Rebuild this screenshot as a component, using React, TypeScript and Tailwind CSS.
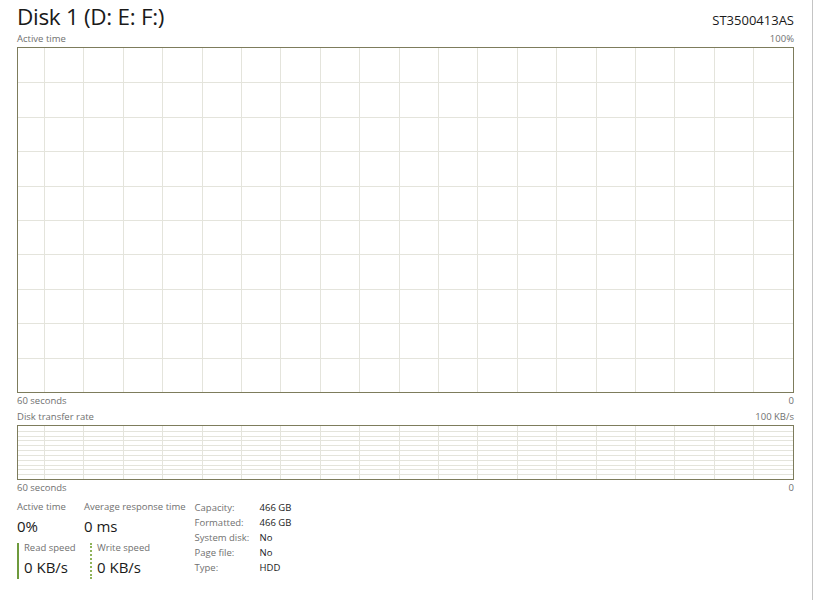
import React from "react";

// ---------------------------------------------------------------------------
// Grid drawn behind an empty performance graph
// ---------------------------------------------------------------------------
function GraphGrid({
  width,
  height,
  rows,
  colOffset,
  colStep,
}: {
  width: number;
  height: number;
  rows: number;
  colOffset: number;
  colStep: number;
}) {
  const cols: number[] = [];
  for (let x = colOffset; x < width; x += colStep) cols.push(Math.round(x) + 0.5);
  const lines: number[] = [];
  for (let i = 1; i < rows; i++) lines.push(Math.round((height * i) / rows) + 0.5);

  return (
    <svg width={width} height={height} className="block">
      {lines.map((y) => (
        <line key={"h" + y} x1={0} x2={width} y1={y} y2={y} stroke="#e4e4dc" strokeWidth={1} />
      ))}
      {cols.map((x) => (
        <line key={"v" + x} x1={x} x2={x} y1={0} y2={height} stroke="#e4e4dc" strokeWidth={1} />
      ))}
    </svg>
  );
}

function AxisRow({ left, right }: { left: string; right: string }) {
  return (
    <div className="flex justify-between items-center h-[14px] text-[9.5px] leading-none text-[#707070]">
      <span>{left}</span>
      <span>{right}</span>
    </div>
  );
}

function Stat({ label, value }: { label: string; value: string }) {
  return (
    <div className="flex flex-col whitespace-nowrap">
      <span className="text-[9.5px] leading-[14px] text-[#707070]">{label}</span>
      <span className="text-[15px] leading-[20px] text-[#1a1a1a] mt-[2px]">{value}</span>
    </div>
  );
}

const details: [string, string][] = [
  ["Capacity:", "466 GB"],
  ["Formatted:", "466 GB"],
  ["System disk:", "No"],
  ["Page file:", "No"],
  ["Type:", "HDD"],
];

export default function App() {
  return (
    <div
      className="w-[815px] h-[600px] bg-white flex overflow-hidden"
      style={{ fontFamily: '"Open Sans", "Noto Sans", sans-serif' }}>
      <div className="w-[812px] pl-[17px] pr-[18px] flex flex-col">
        {/* Header */}
        <div className="flex justify-between items-end h-[30px] text-[#1a1a1a]">
          <span className="text-[22.5px] leading-none tracking-[-0.3px] mb-[2px]">Disk 1 (D: E: F:)</span>
          <span className="text-[13px] leading-none mb-[3px]">ST3500413AS</span>
        </div>

        <div className="mt-[2px]">
          <AxisRow left="Active time" right="100%" />
        </div>

        {/* Active time graph */}
        <div className="mt-[1px] border border-[#7d7c5c] h-[346px]">
          <GraphGrid width={775} height={344} rows={10} colOffset={26} colStep={39.4} />
        </div>
        <div className="mt-[1px]">
          <AxisRow left="60 seconds" right="0" />
        </div>
        <div className="mt-[2px]">
          <AxisRow left="Disk transfer rate" right="100 KB/s" />
        </div>

        {/* Transfer rate graph */}
        <div className="mt-[1px] border border-[#7d7c5c] h-[55px]">
          <GraphGrid width={775} height={53} rows={11} colOffset={26} colStep={39.4} />
        </div>
        <div className="mt-[1px]">
          <AxisRow left="60 seconds" right="0" />
        </div>

        {/* Stats */}
        <div className="flex items-start mt-[5px]">
          <div className="flex flex-col">
            <div className="flex">
              <div className="w-[67px]">
                <Stat label="Active time" value="0%" />
              </div>
              <Stat label="Average response time" value="0 ms" />
            </div>
            <div className="flex mt-[5px]">
              <div className="w-[73px] flex">
                <div className="w-[2px] bg-[#6e9a3c] mt-[2px] h-[36px]" />
                <div className="ml-[5px]">
                  <Stat label="Read speed" value="0 KB/s" />
                </div>
              </div>
              <div className="flex">
                <div className="w-[2px] mt-[2px] h-[36px] border-l-2 border-dotted border-[#8fb35a]" />
                <div className="ml-[5px]">
                  <Stat label="Write speed" value="0 KB/s" />
                </div>
              </div>
            </div>
          </div>
          <div className="ml-[9px] grid grid-cols-[65px_auto] content-start text-[9.5px] leading-[15px]">
            {details.map(([k, v]) => (
              <React.Fragment key={k}>
                <span className="text-[#707070]">{k}</span>
                <span className="text-[#1a1a1a]">{v}</span>
              </React.Fragment>
            ))}
          </div>
        </div>
      </div>
      <div className="w-[1px] h-full bg-[#c4c4c4]" />
    </div>
  );
}
